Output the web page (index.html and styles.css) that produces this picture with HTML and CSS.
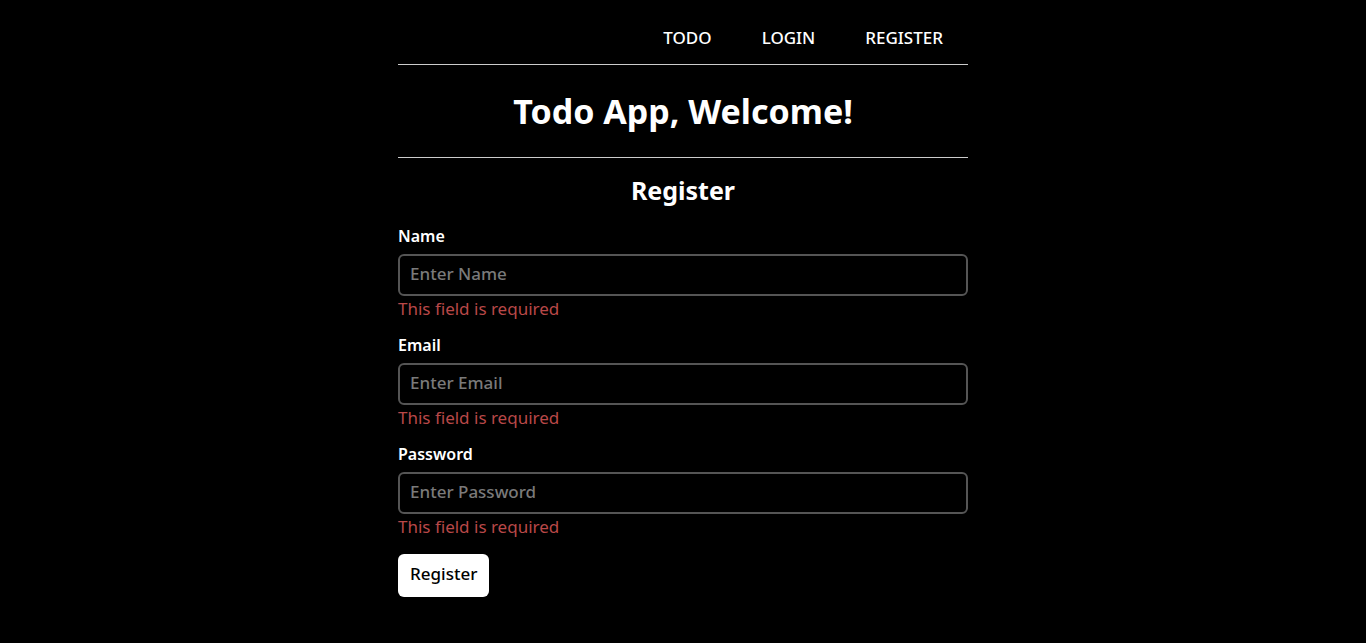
FILE: index.html
```html
<!DOCTYPE html>
<html lang="en">
<head>
<meta charset="utf-8">
<title>Todo App</title>
<link rel="stylesheet" href="styles.css">
</head>
<body>
<div class="container">
  <nav class="nav">
    <a class="nav-link" href="#">TODO</a>
    <a class="nav-link" href="#">LOGIN</a>
    <a class="nav-link" href="#">REGISTER</a>
  </nav>
  <header class="header">
    <h1 class="title">Todo App, Welcome!</h1>
  </header>
  <main class="main">
    <h2 class="subtitle">Register</h2>
    <form class="form">
      <div class="field">
        <label class="label">Name</label>
        <input class="input" type="text" placeholder="Enter Name">
        <span class="error">This field is required</span>
      </div>
      <div class="field">
        <label class="label">Email</label>
        <input class="input" type="text" placeholder="Enter Email">
        <span class="error">This field is required</span>
      </div>
      <div class="field">
        <label class="label">Password</label>
        <input class="input" type="password" placeholder="Enter Password">
        <span class="error">This field is required</span>
      </div>
      <button class="btn" type="button">Register</button>
    </form>
  </main>
</div>
</body>
</html>
```
FILE: styles.css
```css
* { box-sizing: border-box; }
html, body { background: #000; }
body {
  margin: 0;
  color: #fff;
  font-family: "Noto Sans", sans-serif;
}
.container {
  width: 570px;
  margin: 0 auto;
}
.nav {
  display: flex;
  justify-content: flex-end;
  align-items: center;
  height: 65px;
  padding: 11px 25px 0 0;
  border-bottom: 1px solid #ccc;
}
.nav-link {
  color: #fff;
  text-decoration: none;
  font-size: 17px;
  font-weight: 500;
  margin-left: 50px;
}
.header {
  height: 93px;
  display: flex;
  align-items: center;
  justify-content: center;
  border-bottom: 1px solid #ccc;
}
.title {
  margin: 0;
  font-size: 34px;
  font-weight: 700;
}
.main { padding-top: 14px; }
.subtitle {
  margin: 0;
  text-align: center;
  font-size: 25px;
  font-weight: 700;
  line-height: 36px;
}
.form { display: flex; flex-direction: column; margin-top: 17px; }
.field { display: flex; flex-direction: column; margin-bottom: 13px; }
.label {
  font-size: 16px;
  font-weight: 600;
  line-height: 22px;
  margin-bottom: 7px;
}
.input {
  height: 42px;
  background: #000;
  border: 2px solid #555;
  border-radius: 6px;
  padding: 0 10px 4px;
  font-family: inherit;
  font-size: 17px;
  font-weight: 500;
  color: #fff;
  outline: none;
}
.input::placeholder { color: #7a7a7a; }
.error {
  color: #b94848;
  font-size: 17px;
  line-height: 24px;
  margin-top: 1px;
}
.btn {
  align-self: flex-start;
  margin-top: 2px;
  height: 43px;
  padding: 0 12px 4px;
  background: #fff;
  color: #000;
  border: none;
  border-radius: 6px;
  font-family: inherit;
  font-size: 17px;
  font-weight: 500;
}
```
